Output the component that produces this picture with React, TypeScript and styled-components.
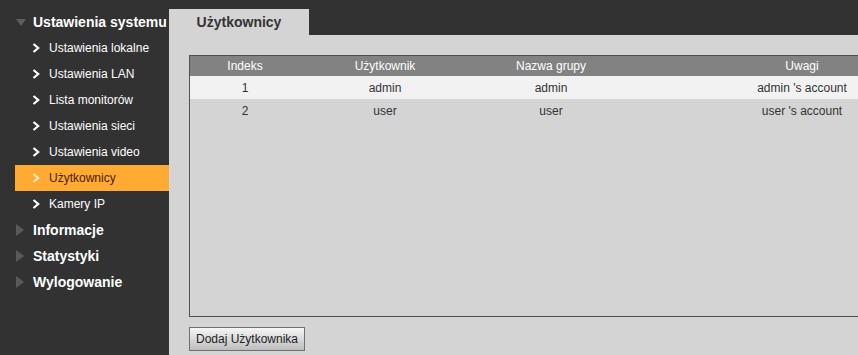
import React from "react";
import styled, { createGlobalStyle } from "styled-components";

const GlobalStyle = createGlobalStyle`
  html, body {
    margin: 0;
    padding: 0;
    height: 100%;
    overflow: hidden;
    background: #323232;
  }
  body {
    font-family: "Liberation Sans", Arial, sans-serif;
  }
`;

const Page = styled.div`
  display: flex;
  width: 100%;
  height: 355px;
  padding-top: 9px;
  box-sizing: border-box;
  background: #323232;
  overflow: hidden;
`;

const Sidebar = styled.nav`
  width: 169px;
  flex-shrink: 0;
  display: flex;
  flex-direction: column;
`;

const Section = styled.div`
  display: flex;
  align-items: center;
  height: 26px;
  padding-left: 15px;
  color: #fff;
  font-size: 14px;
  font-weight: bold;
  white-space: nowrap;
`;

const TriangleBox = styled.span`
  width: 18px;
  display: flex;
  align-items: center;
`;

const SubItem = styled.div<{ $active?: boolean }>`
  display: flex;
  align-items: center;
  height: 26px;
  margin-left: 15px;
  padding-left: 17px;
  font-size: 12px;
  color: ${(p) => (p.$active ? "#4a1a00" : "#fff")};
  background: ${(p) => (p.$active ? "#ffab33" : "transparent")};
  white-space: nowrap;
`;

const ChevronBox = styled.span`
  width: 17px;
  display: flex;
  align-items: center;
`;

const Main = styled.main`
  flex: 1;
  display: flex;
  flex-direction: column;
  min-width: 0;
  overflow: hidden;
`;

const TabBar = styled.div`
  display: flex;
  height: 26px;
`;

const Tab = styled.div`
  width: 140px;
  display: flex;
  align-items: center;
  justify-content: center;
  background: #d4d4d4;
  color: #333;
  font-size: 14px;
  font-weight: bold;
`;

const Panel = styled.section`
  flex: 1;
  background: #d4d4d4;
  padding: 20px 0 0 20px;
  display: flex;
  flex-direction: column;
  align-items: flex-start;
  overflow: hidden;
`;

const TableFrame = styled.div`
  width: 800px;
  height: 262px;
  border: 1px solid #505050;
  box-sizing: border-box;
  flex-shrink: 0;
`;

const Table = styled.table`
  width: 782px;
  border-collapse: collapse;
  table-layout: fixed;
  font-size: 12px;
`;

const HeadCell = styled.th<{ $w: number }>`
  width: ${(p) => p.$w}px;
  height: 20px;
  padding: 0;
  background: #828282;
  color: #fff;
  font-weight: normal;
  text-align: center;
`;

const Row = styled.tr<{ $odd?: boolean }>`
  background: ${(p) => (p.$odd ? "#f2f2f2" : "#d4d4d4")};
`;

const Cell = styled.td`
  height: 23px;
  padding: 0;
  color: #333;
  text-align: center;
`;

const Button = styled.button`
  margin-top: 10px;
  height: 24px;
  padding: 0 6px;
  border: 1px solid #707070;
  background: linear-gradient(#f6f6f6, #bdbdbd);
  color: #222;
  font-family: "Liberation Sans", Arial, sans-serif;
  font-size: 12px;
  cursor: pointer;
`;

const Chevron = ({ color }: { color: string }) => (
  <svg width="8" height="10" viewBox="0 0 8 10">
    <polyline
      points="1.5,1 6.2,5 1.5,9"
      fill="none"
      stroke={color}
      strokeWidth="2.2"
    />
  </svg>
);

const Triangle = ({ down }: { down?: boolean }) => (
  <svg width="12" height="12" viewBox="0 0 12 12">
    {down ? (
      <polygon points="1,3 11,3 6,10" fill="#5e5e5e" />
    ) : (
      <polygon points="1,0 9,6 1,12" fill="#5a5a5a" />
    )}
  </svg>
);

const subItems = [
  "Ustawienia lokalne",
  "Ustawienia LAN",
  "Lista monitorów",
  "Ustawienia sieci",
  "Ustawienia video",
  "Użytkownicy",
  "Kamery IP",
];

const columns = [
  { title: "Indeks", w: 110 },
  { title: "Użytkownik", w: 170 },
  { title: "Nazwa grupy", w: 162 },
  { title: "Uwagi", w: 340 },
];

const users = [
  { id: 1, name: "admin", group: "admin", note: "admin 's account" },
  { id: 2, name: "user", group: "user", note: "user 's account" },
];

export default function App() {
  return (
    <>
      <GlobalStyle />
      <Page>
        <Sidebar>
          <Section>
            <TriangleBox>
              <Triangle down />
            </TriangleBox>
            Ustawienia systemu
          </Section>
          {subItems.map((item) => {
            const active = item === "Użytkownicy";
            return (
              <SubItem key={item} $active={active}>
                <ChevronBox>
                  <Chevron color={active ? "#ffe6bf" : "#fff"} />
                </ChevronBox>
                {item}
              </SubItem>
            );
          })}
          {["Informacje", "Statystyki", "Wylogowanie"].map((s) => (
            <Section key={s}>
              <TriangleBox>
                <Triangle />
              </TriangleBox>
              {s}
            </Section>
          ))}
        </Sidebar>
        <Main>
          <TabBar>
            <Tab>Użytkownicy</Tab>
          </TabBar>
          <Panel>
            <TableFrame>
              <Table>
                <thead>
                  <tr>
                    {columns.map((c) => (
                      <HeadCell key={c.title} $w={c.w}>
                        {c.title}
                      </HeadCell>
                    ))}
                  </tr>
                </thead>
                <tbody>
                  {users.map((u, i) => (
                    <Row key={u.id} $odd={i % 2 === 0}>
                      <Cell>{u.id}</Cell>
                      <Cell>{u.name}</Cell>
                      <Cell>{u.group}</Cell>
                      <Cell>{u.note}</Cell>
                    </Row>
                  ))}
                </tbody>
              </Table>
            </TableFrame>
            <Button>Dodaj Użytkownika</Button>
          </Panel>
        </Main>
      </Page>
    </>
  );
}
